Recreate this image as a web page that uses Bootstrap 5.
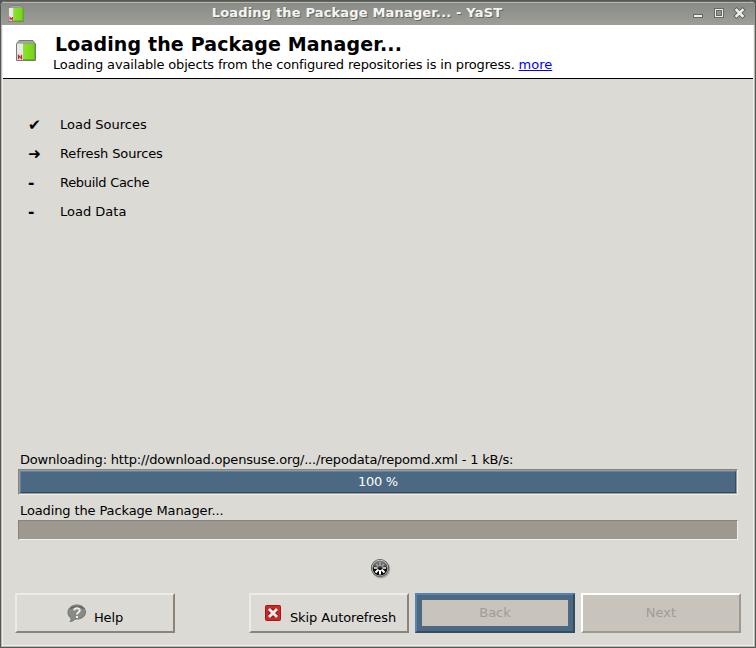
<!DOCTYPE html>
<html lang="en">
<head>
<meta charset="utf-8">
<title>Loading the Package Manager... - YaST</title>
<link href="https://cdn.jsdelivr.net/npm/bootstrap@5.3.0/dist/css/bootstrap.min.css" rel="stylesheet">
<style>
body{font:13px/16px "DejaVu Sans",sans-serif;color:#000;background:#555753;overflow:hidden}
.window{width:756px;height:648px;background:#dbdad5;border:1px solid #555753;border-radius:6px 6px 0 0;overflow:hidden}
.titlebar{height:24px;background:linear-gradient(#888a85,#9c9e97);border-top:1px solid #666863;box-shadow:inset 0 1px #b4b5b1;padding:0 9px 0 7px}
.caption{font-weight:bold;letter-spacing:.17px;color:#f4f4f2;text-shadow:1px 1px #666863;line-height:20px;padding:0 2px 2px 0}
.controls{margin-bottom:3px}
.client{border:solid #b9bab3;border-width:0 1px 1px;box-shadow:inset 1px 0 #eeeeec,inset -1px 0 #eeeeec,inset 0 -1px #eeeeec}
.heading{height:54px;background:#fff;border-bottom:1px solid #000;margin:0 1px;padding:7px 0 0 12px}
.heading h1{font:bold 19px/25px "DejaVu Sans",sans-serif;letter-spacing:.14px;margin:0 0 0 2px}
.subtitle{letter-spacing:-.165px}
.subtitle a{color:#00f;letter-spacing:0}
.steps{padding:38px 0 0 26px}
.steps li{height:29px;line-height:16px}
.steps .snug{letter-spacing:-.13px}
.steps .tight{letter-spacing:-.3px}
.glyph{width:32px;font-weight:bold;font-size:15.5px}
.bars{padding:0 16px}
.bar-label{padding:0 0 1px 2px;letter-spacing:-.12px}
.bar-label.download{letter-spacing:-.19px}
.trough{border-radius:0;background:#9d9890;border:1px solid;border-color:#88847a #f1f0ec #f1f0ec #88847a;height:20px}
.trough.full{height:26px;padding:1px}
.trough .progress-bar{background:#4b6983;border:1px solid;border-color:#5484b0 #364b5e #364b5e #5484b0;font-size:13px;letter-spacing:-.3px}
.spinner{height:53px;padding:18px 0 0 368px}
.footer-row{gap:6px;padding:0 13px 13px}
.ybtn{--bs-btn-border-radius:0;--bs-btn-padding-x:0;--bs-btn-padding-y:0;width:160px;height:40px;font-size:13px;line-height:16px;color:#000;border:2px solid;border-color:#ecebe6 #8c8479 #8c8479 #ecebe6;background:#dbdad5}
.ybtn:disabled{opacity:1;color:#a09c94;background:#c8c4bc;border-color:#fff #9d9890 #9d9890 #fff}
.ybtn.focused:disabled{border-color:#5484b0 #364b5e #364b5e #5484b0;box-shadow:inset 0 0 0 5px #4b6983}
.blabel{padding-top:15px;letter-spacing:-.1px}
.help-icon{margin:9px 7px 0 0}
.skip-icon{margin:10px 9px 0 3px}
svg{display:block;flex:none}
</style>
</head>
<body>
<svg width="0" height="0" class="position-absolute"><defs>
<linearGradient id="green" x2="1"><stop stop-color="#8ae52c"/><stop offset="1" stop-color="#73d216"/></linearGradient>
<linearGradient id="dark" x2="0" y2="1"><stop stop-color="#888"/><stop offset=".45" stop-color="#444"/><stop offset=".55" stop-color="#111"/><stop offset="1" stop-color="#000"/></linearGradient>
<symbol id="pkg" viewBox="0 0 20 21"><path d="M.5 4 3 .5h14L19.500 4v16.500H.5z" fill="#888a85" stroke="#777974"/><path d="M3 1h14l1.500 2h-17z" fill="#a5a6a3"/><path d="M1 3.500h6V20H1z" fill="#e9e9e7"/><path d="M7 3.500h12V20H7z" fill="url(#green)"/><path d="M18.500 4v15.500H7" fill="none" stroke="#62b812"/><path d="M2.500 19.200v-3.700l3 3v-3.700" fill="none" stroke="#d3202a" stroke-width="1.300"/></symbol>
</defs></svg>
<main class="window d-flex flex-column">
  <header class="titlebar d-flex align-items-center">
    <svg width="16" height="17"><use href="#pkg"/></svg>
    <div class="caption flex-grow-1 text-center">Loading the Package Manager... - YaST</div>
    <svg class="controls" width="54" height="14" shape-rendering="crispEdges"><g fill="none" stroke="#666863"><path fill="#eeeeec" d="M1.500 9.500h9v3h-9z"/><path fill="#eeeeec" d="M22.500 3.500h9v9h-9z"/><path fill="#90928c" d="M24.500 5.500h5v5h-5z"/></g><g shape-rendering="auto"><path d="m44.500 5 6 6m0-6-6 6" stroke="#666863" stroke-width="4.500" stroke-linecap="square"/><path d="m44.500 5 6 6m0-6-6 6" stroke="#eeeeec" stroke-width="2.500" stroke-linecap="square"/></g></svg>
  </header>
  <div class="client flex-grow-1 d-flex flex-column">
    <section class="heading d-flex">
      <svg width="22" height="23" class="mt-2"><use href="#pkg" width="20" height="21" x="1"/></svg>
      <div class="ms-3"><h1>Loading the Package Manager...</h1>
      <div class="subtitle">Loading available objects from the configured repositories is in progress. <a href="#">more</a></div></div>
    </section>
    <ul class="steps list-unstyled mb-auto">
      <li class="d-flex"><span class="glyph">✔</span>Load Sources</li>
      <li class="d-flex snug"><span class="glyph">➜</span>Refresh Sources</li>
      <li class="d-flex tight"><span class="glyph">-</span>Rebuild Cache</li>
      <li class="d-flex"><span class="glyph">-</span>Load Data</li>
    </ul>
    <section class="bars">
      <div class="bar-label download">Downloading: http://download.opensuse.org/.../repodata/repomd.xml - 1 kB/s:</div>
      <div class="progress trough full"><div class="progress-bar" style="width:100%">100 %</div></div>
      <div class="bar-label mt-2">Loading the Package Manager...</div>
      <div class="progress trough"></div>
    </section>
    <div class="spinner"><svg width="21" height="21"><circle cx="11" cy="11.200" r="9.300" fill="#aaa9a3"/><circle cx="10" cy="10" r="9" fill="#4b4b49"/><circle cx="10" cy="10" r="8.200" fill="#d0d0ce"/><circle cx="10" cy="10" r="7.500" fill="url(#dark)"/><g stroke="#fff" stroke-width="2"><path d="M10 12v4.500M11.500 11.500l3 3M8.500 11.500l-3 3"/><path d="M12.500 10H16M7.500 10H4" stroke="#bbb"/><path d="M10 8V4M11.500 8.500l2.500-2.500M8.500 8.500 6 6" stroke="#999"/></g></svg></div>
    <footer class="footer-row d-flex">
      <button class="btn ybtn d-flex justify-content-center me-auto"><svg width="20" height="19" class="help-icon"><path d="M10 1c5 0 8.500 3 8.500 7s-3.500 7-8.500 7H8c-1 1.500-3 2.500-5 2.500 1-1 1.500-2 1-3.500C2 13 1 11 1 8c0-4 4-7 9-7z" fill="#888a85" stroke="#73756f"/><path d="M3.500 5C5 2 15 2 16.500 5" fill="none" stroke="#656761" stroke-width="1.500"/><path d="M7.300 6.500C7 3.500 13 3.500 12.700 6.500c0 1.800-2.700 1.800-2.700 4M10 12v2" fill="none" stroke="#eee" stroke-width="2"/></svg><span class="blabel">Help</span></button>
      <button class="btn ybtn d-flex justify-content-center"><svg width="16" height="16" class="skip-icon"><rect x=".5" y=".5" width="15" height="15" rx="1" fill="#c92a26" stroke="#a01818"/><path d="m4.500 4.500 7 7m0-7-7 7" stroke="#8f1515" stroke-width="5"/><path d="m4 4 8 8m0-8-8 8" stroke="#eee" stroke-width="3"/></svg><span class="blabel">Skip Autorefresh</span></button>
      <button class="btn ybtn focused" disabled>Back</button>
      <button class="btn ybtn" disabled>Next</button>
    </footer>
  </div>
</main>
<script src="https://cdn.jsdelivr.net/npm/bootstrap@5.3.0/dist/js/bootstrap.bundle.min.js"></script>
</body>
</html>
